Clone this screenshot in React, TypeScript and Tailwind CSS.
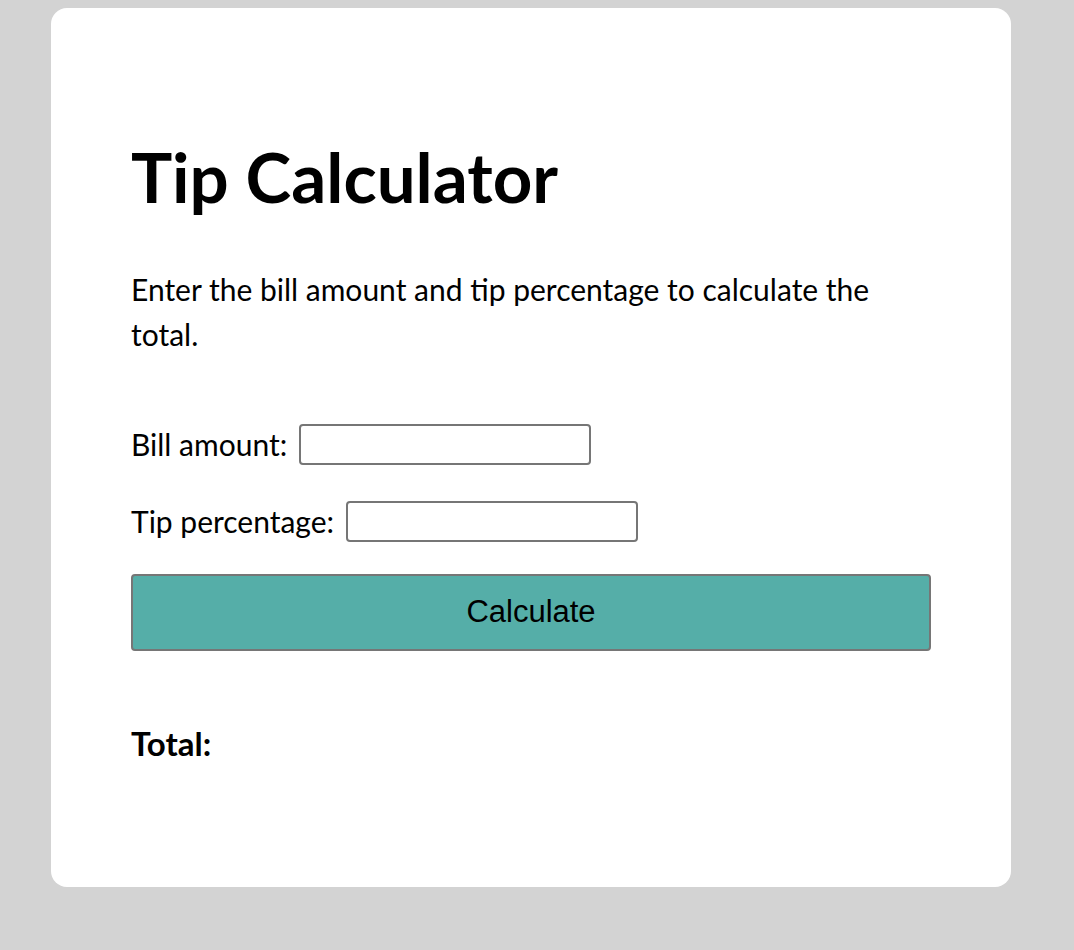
export default function App() {
  return (
    <div className="min-h-[950px] bg-[#d3d3d3] pt-2 pl-[51px] font-['Lato',sans-serif] text-black">
      <div className="w-[960px] h-[879px] rounded-2xl bg-white px-20 pt-[128px]">
        <h1 className="text-[69px] font-bold leading-[1.2]">Tip Calculator</h1>
        <p className="mt-[48px] text-[30px] leading-[45px]">
          Enter the bill amount and tip percentage to calculate the total.
        </p>
        <div className="mt-[65px] flex items-center gap-3 text-[30px]">
          <label>Bill amount:</label>
          <input className="w-[292px] h-[41px] rounded border-2 border-[#767676]" />
        </div>
        <div className="mt-[32px] flex items-center gap-3 text-[30px]">
          <label>Tip percentage:</label>
          <input className="w-[292px] h-[41px] rounded border-2 border-[#767676]" />
        </div>
        <button className="mt-[30px] block w-full h-[77px] rounded bg-[#55aea8] border-2 border-[#767676] font-['Liberation_Sans',sans-serif] text-[31px]">
          Calculate
        </button>
        <p className="mt-[68px] text-[33px] font-bold">Total:</p>
      </div>
    </div>
  );
}
